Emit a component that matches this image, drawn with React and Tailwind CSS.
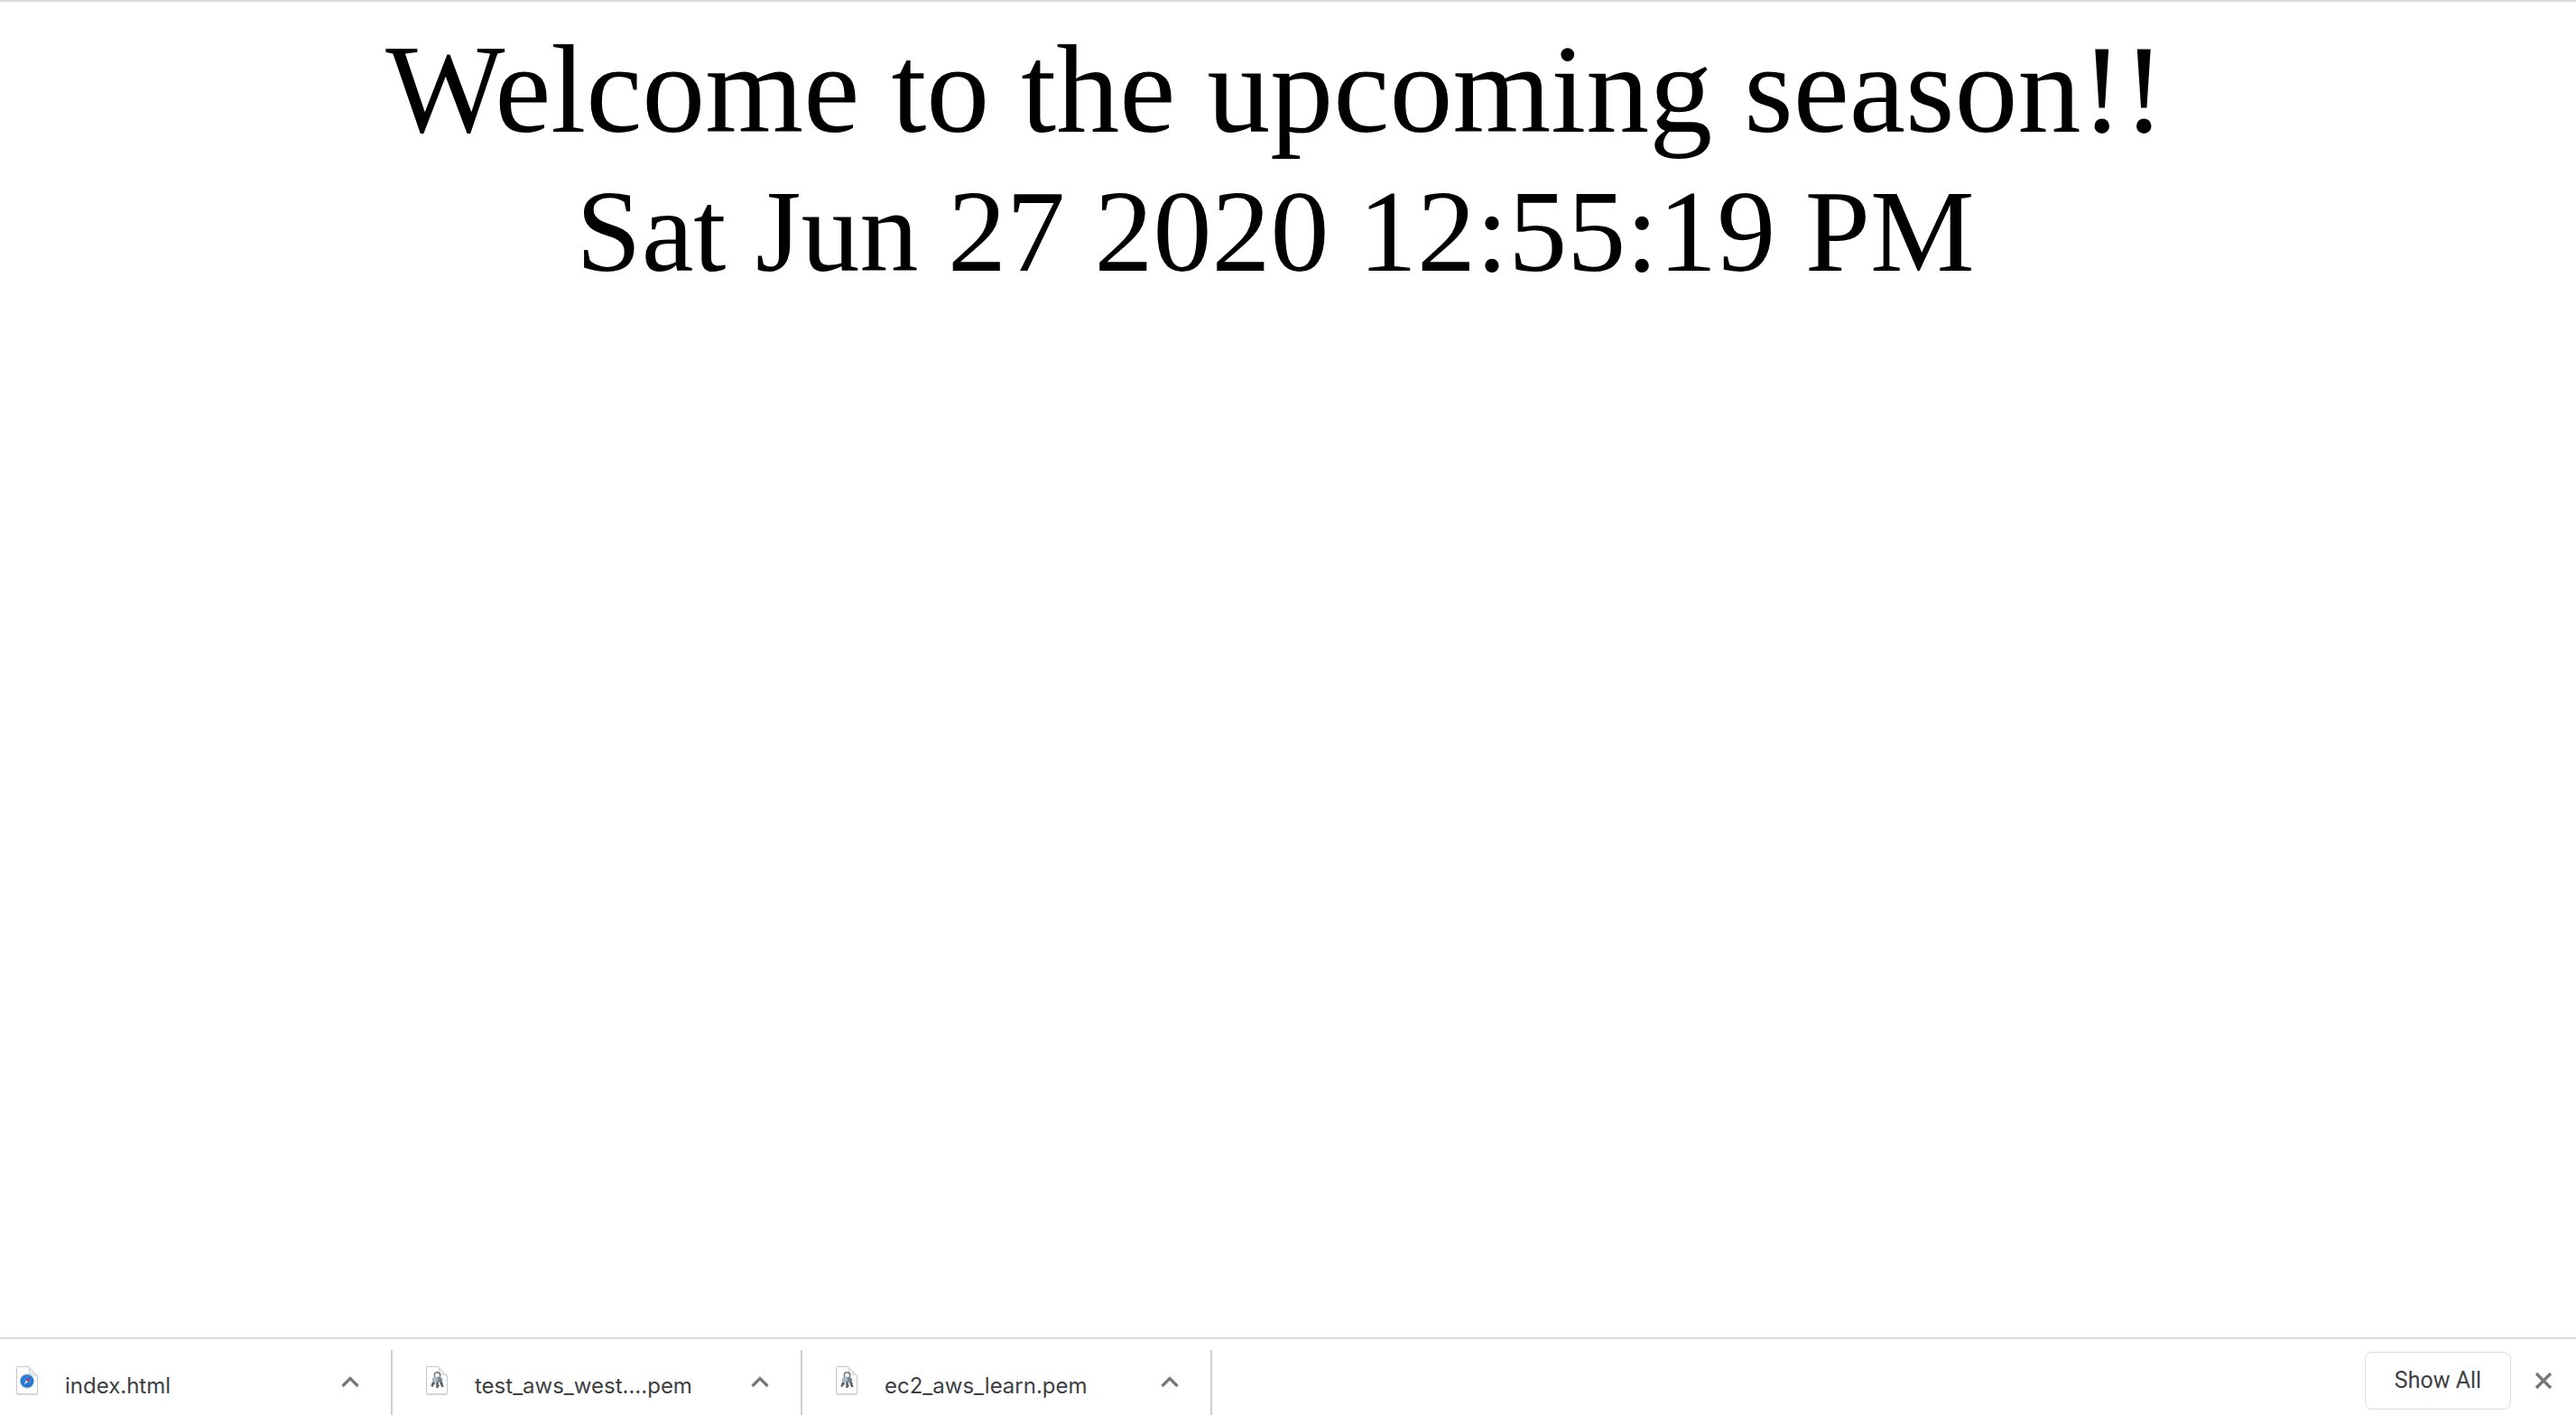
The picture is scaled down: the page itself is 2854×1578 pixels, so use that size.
import React from "react";

function FileSheet({ id, children }) {
  return (
    <svg width="26" height="34" viewBox="0 0 26 34" fill="none" aria-hidden="true">
      <defs>
        <linearGradient id={id} x1="14" y1="11" x2="20" y2="4" gradientUnits="userSpaceOnUse">
          <stop stopColor="#ffffff" />
          <stop offset="1" stopColor="#dedede" />
        </linearGradient>
      </defs>
      <path d="M1.5 32.4h23" stroke="#b4b4b4" strokeWidth="1" opacity="0.6" />
      <path d="M2 1.5h12.5L24.5 11.5V31a.8.8 0 0 1-.8.8H2.300a.8.8 0 0 1-.8-.8V2z" fill="#fff" stroke="#c9c9c9" />
      <path d="M14.500 1.500c1.200 3 1.300 6 .8 9 3-.6 6-.3 9.200 1z" fill={`url(#${id})`} stroke="#cdcdcd" strokeWidth="0.9" />
      {children}
    </svg>
  );
}

function HtmlIcon() {
  return (
    <FileSheet id="fold-html">
      <circle cx="13" cy="17.500" r="8.200" fill="#c9d3dc" />
      <circle cx="13" cy="17.500" r="7.300" fill="#2577d6" />
      <circle cx="13" cy="15.500" r="4.800" fill="#2f8fe6" opacity="0.6" />
      <path d="M16.600 13.600l-2.700 4.700-1.700-1.700z" fill="#e0282e" stroke="#e0282e" strokeWidth="0.600" />
      <path d="M9.400 21.400l2.800-4.800 1.700 1.700z" fill="#eef1f4" />
    </FileSheet>
  );
}

function KeysIcon({ id }) {
  return (
    <FileSheet id={id}>
      <circle cx="13.500" cy="11" r="3.200" stroke="#707274" strokeWidth="1.400" />
      <path d="M10.500 15.500l-3 8M13.500 16v9M16 15.500l3.500 8.500" stroke="#5f6365" strokeWidth="2.600" />
      <path d="M8.800 19.500l2 1.500M14 22l2 .5M17.500 20.500l2-1" stroke="#4e5254" strokeWidth="1.200" />
      <path d="M8 14l5-1.500 1 5.500-6 1z" fill="#a3bac6" />
      <path d="M14 12.500l4.500 1.500 1 3.500-5 1z" fill="#75858e" />
    </FileSheet>
  );
}

function Download({ name, icon, first }) {
  return (
    <li className={`flex h-[72px] items-center border-r-2 border-[#cecece] ${first ? "w-[435px] pl-[17px]" : "w-[454px] pl-9"}`}>
      <button type="button" className="flex flex-1 items-center gap-[29px] text-left">
        <span className="mb-1">{icon}</span>
        <span className="pt-2">{name}</span>
      </button>
      <button type="button" aria-label={`Options for ${name}`} className="mr-[34px]">
        <svg width="22" height="16" viewBox="0 0 22 16" fill="none" stroke="#757779" strokeWidth="3.200" aria-hidden="true">
          <path d="M2.500 12L11 3.500l8.500 8.500" />
        </svg>
      </button>
    </li>
  );
}

export default function App() {
  return (
    <div className="flex min-h-screen flex-col border-t-2 border-[#dbdae1] bg-white text-black">
      <main className="flex-1 pt-4 pr-7 text-center font-['Liberation_Serif',serif]">
        <h1 className="text-[140px] leading-[162px]">Welcome to the upcoming season!!</h1>
        <p className="text-[130px] leading-[152px]">
          <time dateTime="2020-06-27T12:55:19">Sat Jun 27 2020 12:55:19 PM</time>
        </p>
      </main>
      <footer className="flex h-24 items-start justify-between border-t-2 border-[#dbdae1] font-['Inter',sans-serif] text-2xl text-[#3c4043]">
        <ul className="flex pt-3">
          <Download first name="index.html" icon={<HtmlIcon />} />
          <Download name="test_aws_west….pem" icon={<KeysIcon id="fold-west" />} />
          <Download name="ec2_aws_learn.pem" icon={<KeysIcon id="fold-learn" />} />
        </ul>
        <div className="flex items-center gap-6 pt-3.5 pr-6">
          <button type="button" className="h-16 w-[162px] rounded-lg border border-[#dadce0] font-['Roboto',sans-serif] text-[25px]">
            Show All
          </button>
          <button type="button" aria-label="Close">
            <svg width="24" height="24" viewBox="0 0 24 24" fill="none" stroke="#757779" strokeWidth="3.400" aria-hidden="true">
              <path d="M4 4l16 16M20 4L4 20" />
            </svg>
          </button>
        </div>
      </footer>
    </div>
  );
}
